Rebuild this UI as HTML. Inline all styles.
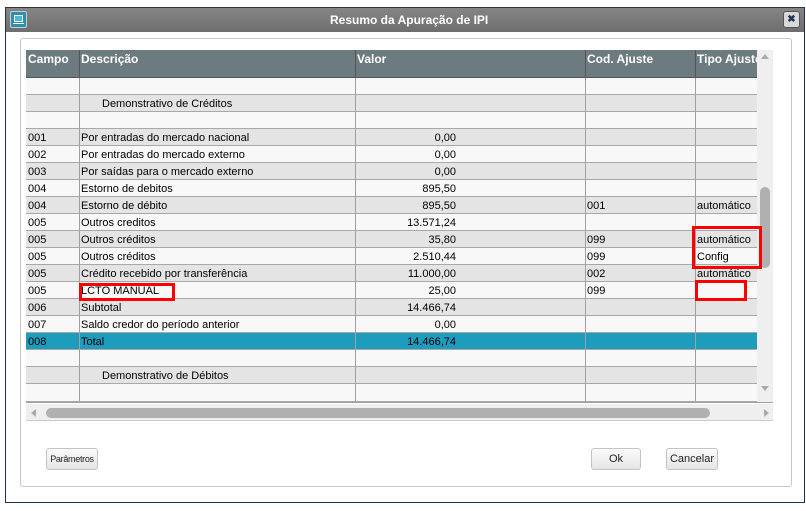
<!DOCTYPE html>
<html><head><meta charset="utf-8"><style>
*{margin:0;padding:0;box-sizing:border-box}
body{width:806px;height:511px;background:#fff;position:relative;overflow:hidden;font-family:"Liberation Sans",Arial,sans-serif;font-size:11px;color:#000}
.abs{position:absolute}
.win{left:5px;top:7px;width:800px;height:496px;border:1px solid #1e3450;border-top:1px solid #333;background:#fff}
.title{left:6px;top:8px;width:798px;height:24px;background:linear-gradient(#858585,#6e6e6e);}
.title span{position:absolute;left:324px;top:5px;color:#fff;font-weight:bold;font-size:12px}
.panel{left:20px;top:38px;width:772px;height:449px;border:1px solid #c8c8c8;border-radius:3px}
.hdr{left:26px;top:50px;width:731px;height:28px;background:#6c7b80;border-bottom:1px solid #555;overflow:hidden}
.hdr div{position:absolute;top:2px;color:#fff;font-weight:bold;font-size:12px;white-space:nowrap}
.row{position:absolute;left:26px;width:731px;height:17px;border-bottom:1px solid #a8a8a8;overflow:hidden}
.row div{position:absolute;top:3px;white-space:nowrap}
.vl{position:absolute;top:78px;width:1px;height:324px;background:#a0a0a0}
.red{position:absolute;border:3px solid #f00}
.btn{position:absolute;height:22px;border:1px solid #c4c4c4;border-radius:3px;background:linear-gradient(#fafafa,#e6e6e6);font-size:11px;text-align:center;line-height:20px;color:#222}
</style></head><body>
<div class="abs win"></div>
<div class="abs title"><span>Resumo da Apuração de IPI</span></div>
<div class="abs" style="left:10px;top:11px;width:17px;height:17px;border:1px solid #ccc;border-radius:2px;background:#2a8fb0"><div style="position:absolute;left:3px;top:3px;width:9px;height:7px;border:1px solid #fff;background:#4fb6d8"></div><div style="position:absolute;left:2px;top:11px;width:11px;height:1px;background:#fff"></div></div>
<div class="abs" style="left:783px;top:11px;width:17px;height:17px;border:1px solid #555;border-radius:3px;background:#d8d8d8;font-size:10px;font-weight:bold;color:#1e3450;text-align:center;line-height:15px">✖</div>
<div class="abs panel"></div>
<div class="abs" style="left:26px;top:78px;width:731px;height:324px;background:#f8f8f8"></div>
<div class="abs hdr"><div style="left:2px">Campo</div><div style="left:55px">Descrição</div><div style="left:331px">Valor</div><div style="left:561px">Cod. Ajuste</div><div style="left:671px">Tipo Ajuste</div></div>
<div class="abs" style="left:79px;top:50px;width:1px;height:28px;background:#555"></div>
<div class="abs" style="left:355px;top:50px;width:1px;height:28px;background:#555"></div>
<div class="abs" style="left:585px;top:50px;width:1px;height:28px;background:#555"></div>
<div class="abs" style="left:695px;top:50px;width:1px;height:28px;background:#555"></div>

<div class="row" style="top:78px;background:#f8f8f8"></div>
<div class="row" style="top:95px;background:#e4e4e4"><div style="left:76px">Demonstrativo de Créditos</div></div>
<div class="row" style="top:112px;background:#f8f8f8"></div>
<div class="row" style="top:129px;background:#e4e4e4"><div style="left:2px">001</div><div style="left:55px">Por entradas do mercado nacional</div><div style="right:301px">0,00</div></div>
<div class="row" style="top:146px;background:#f8f8f8"><div style="left:2px">002</div><div style="left:55px">Por entradas do mercado externo</div><div style="right:301px">0,00</div></div>
<div class="row" style="top:163px;background:#e4e4e4"><div style="left:2px">003</div><div style="left:55px">Por saídas para o mercado externo</div><div style="right:301px">0,00</div></div>
<div class="row" style="top:180px;background:#f8f8f8"><div style="left:2px">004</div><div style="left:55px">Estorno de debitos</div><div style="right:301px">895,50</div></div>
<div class="row" style="top:197px;background:#e4e4e4"><div style="left:2px">004</div><div style="left:55px">Estorno de débito</div><div style="right:301px">895,50</div><div style="left:561px">001</div><div style="left:671px">automático</div></div>
<div class="row" style="top:214px;background:#f8f8f8"><div style="left:2px">005</div><div style="left:55px">Outros creditos</div><div style="right:301px">13.571,24</div></div>
<div class="row" style="top:231px;background:#e4e4e4"><div style="left:2px">005</div><div style="left:55px">Outros créditos</div><div style="right:301px">35,80</div><div style="left:561px">099</div><div style="left:671px">automático</div></div>
<div class="row" style="top:248px;background:#f8f8f8"><div style="left:2px">005</div><div style="left:55px">Outros créditos</div><div style="right:301px">2.510,44</div><div style="left:561px">099</div><div style="left:671px">Config</div></div>
<div class="row" style="top:265px;background:#e4e4e4"><div style="left:2px">005</div><div style="left:55px">Crédito recebido por transferência</div><div style="right:301px">11.000,00</div><div style="left:561px">002</div><div style="left:671px">automático</div></div>
<div class="row" style="top:282px;background:#f8f8f8"><div style="left:2px">005</div><div style="left:55px">LCTO MANUAL</div><div style="right:301px">25,00</div><div style="left:561px">099</div></div>
<div class="row" style="top:299px;background:#e4e4e4"><div style="left:2px">006</div><div style="left:55px">Subtotal</div><div style="right:301px">14.466,74</div></div>
<div class="row" style="top:316px;background:#f8f8f8"><div style="left:2px">007</div><div style="left:55px">Saldo credor do período anterior</div><div style="right:301px">0,00</div></div>
<div class="row" style="top:333px;background:#1e9cbd"><div style="left:2px">008</div><div style="left:55px">Total</div><div style="right:301px">14.466,74</div></div>
<div class="row" style="top:350px;background:#f8f8f8"></div>
<div class="row" style="top:367px;background:#e4e4e4"><div style="left:76px">Demonstrativo de Débitos</div></div>
<div class="row" style="top:384px;background:#f8f8f8;height:18px"></div>

<div class="vl" style="left:79px"></div>
<div class="vl" style="left:355px"></div>
<div class="vl" style="left:585px"></div>
<div class="vl" style="left:695px"></div>

<div class="abs" style="left:757px;top:50px;width:16px;height:352px;background:#efefef"></div>
<div class="abs" style="left:761px;top:54px;width:0;height:0;border-left:4px solid transparent;border-right:4px solid transparent;border-bottom:5px solid #aaa"></div>
<div class="abs" style="left:761px;top:386px;width:0;height:0;border-left:4px solid transparent;border-right:4px solid transparent;border-top:5px solid #aaa"></div>
<div class="abs" style="left:760px;top:187px;width:10px;height:81px;border-radius:5px;background:#b0b0b0"></div>

<div class="abs" style="left:26px;top:402px;width:747px;height:1px;background:#a0a0a0"></div>
<div class="abs" style="left:26px;top:404px;width:747px;height:17px;background:#efefef;border-bottom:1px solid #ccc"></div>
<div class="abs" style="left:31px;top:409px;width:0;height:0;border-top:4px solid transparent;border-bottom:4px solid transparent;border-right:5px solid #aaa"></div>
<div class="abs" style="left:764px;top:409px;width:0;height:0;border-top:4px solid transparent;border-bottom:4px solid transparent;border-left:5px solid #aaa"></div>
<div class="abs" style="left:46px;top:408px;width:664px;height:10px;border-radius:5px;background:#b0b0b0"></div>

<div class="red" style="left:79px;top:283px;width:96px;height:18px"></div>
<div class="red" style="left:692px;top:226px;width:70px;height:43px"></div>
<div class="red" style="left:695px;top:280px;width:52px;height:21px"></div>

<div class="btn" style="left:46px;top:448px;width:52px;font-size:9px;letter-spacing:-0.3px">Parâmetros</div>
<div class="btn" style="left:591px;top:448px;width:50px">Ok</div>
<div class="btn" style="left:666px;top:448px;width:52px">Cancelar</div>
</body></html>
